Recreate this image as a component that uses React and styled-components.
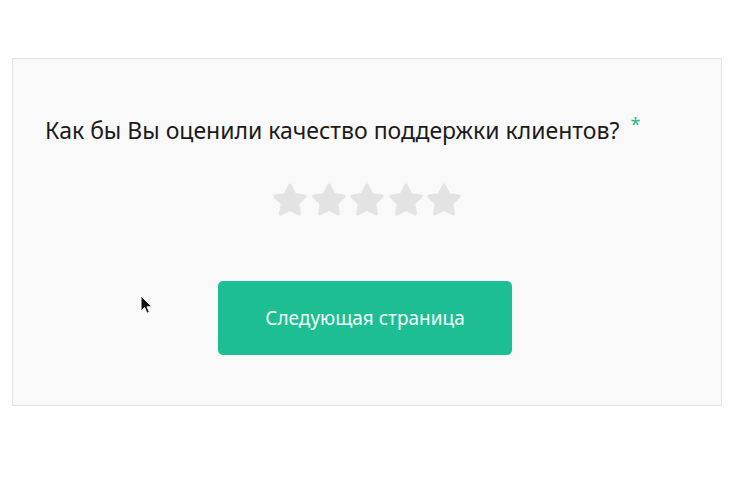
import React from "react";
import styled, { createGlobalStyle } from "styled-components";

const GlobalStyle = createGlobalStyle`
    html, body {
        margin: 0;
        padding: 0;
        background: #ffffff;
    }
    body {
        font-family: "Noto Sans", "Open Sans", sans-serif;
    }
`;

const Page = styled.div`
    position: relative;
    padding: 58px 13px 0 12px;
    height: 491px;
    box-sizing: border-box;
`;

const Card = styled.section`
    height: 348px;
    box-sizing: border-box;
    background: #f9f9f9;
    border: 1px solid #e4e4e4;
    padding: 56px 32px 0 32px;
    display: flex;
    flex-direction: column;
`;

const Question = styled.h2`
    margin: 0;
    font-size: 23px;
    font-weight: 400;
    color: #1b1b1b;
    line-height: 30px;
    height: 30px;
`;

const Required = styled.span`
    position: relative;
    top: -8px;
    color: #1abc8f;
    font-size: 18px;
    margin-left: 11px;
`;

const Stars = styled.div`
    display: flex;
    justify-content: center;
    gap: 0.5px;
    margin-top: 36px;
`;

const StarIcon = styled.svg`
    width: 38px;
    height: 38px;
    fill: ${(p) => (p.$active ? "#1abc8f" : "#e3e3e3")};
`;

const Actions = styled.div`
    display: flex;
    justify-content: center;
    margin-top: 62px;
`;

const NextButton = styled.button`
    width: 294px;
    height: 74px;
    margin-right: 4px;
    border: none;
    border-radius: 5px;
    background: #1dbf92;
    color: #f4fffb;
    font-family: "Noto Sans", "Open Sans", sans-serif;
    font-size: 19px;
    cursor: pointer;
`;

const Cursor = styled.svg`
    position: absolute;
    left: 140px;
    top: 295px;
    width: 14px;
    height: 20px;
`;

const Star = ({ active }) => (
    <StarIcon $active={active} viewBox="0 0 24 24">
        <path
            d="M12 1.6c.5 0 .9.3 1.1.7l2.6 5.4 5.9.8c.9.1 1.3 1.3.6 1.9l-4.3 4.1 1 5.9c.2.9-.8 1.6-1.6 1.2L12 18.9l-5.3 2.8c-.8.4-1.8-.3-1.6-1.2l1-5.9-4.3-4.1c-.7-.6-.3-1.8.6-1.9l5.9-.8 2.6-5.4c.2-.4.6-.7 1.1-.7z"
            strokeLinejoin="round"
        />
    </StarIcon>
);

const App = () => {
    return (
        <Page>
            <GlobalStyle />
            <Card>
                <Question>
                    Как бы Вы оценили качество поддержки клиентов?
                    <Required>*</Required>
                </Question>
                <Stars>
                    {[1, 2, 3, 4, 5].map((n) => (
                        <Star key={n} />
                    ))}
                </Stars>
                <Actions>
                    <NextButton>Следующая страница</NextButton>
                </Actions>
            </Card>
            <Cursor viewBox="0 0 14 20">
                <path
                    d="M1 1v15l3.6-3.4 2.4 5.6 2.4-1-2.4-5.4H12z"
                    fill="#111"
                    stroke="#fff"
                    strokeWidth="1"
                />
            </Cursor>
        </Page>
    );
};

export default App;
